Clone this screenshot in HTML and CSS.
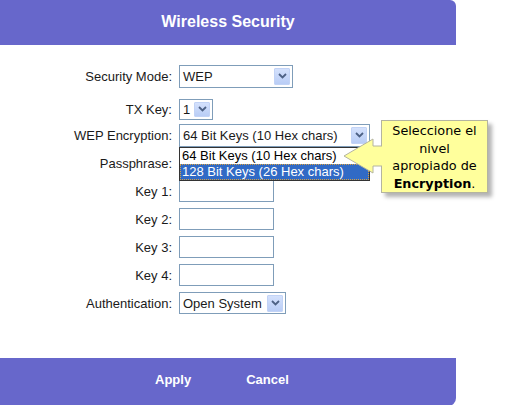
FILE: index.html
```html
<!DOCTYPE html>
<html>
<head>
<meta charset="utf-8">
<link rel="stylesheet" href="styles.css">
</head>
<body>
<div class="page">
  <div class="header">Wireless Security</div>
  <div class="form">
    <div class="row r1">
      <span class="label">Security Mode:</span>
      <div class="select w-mode"><span class="val">WEP</span><span class="btn"><svg width="9" height="6" viewBox="0 0 9 6"><path d="M1 1 L4.5 4.5 L8 1" fill="none" stroke="#4d6185" stroke-width="1.8"/></svg></span></div>
    </div>
    <div class="row r2">
      <span class="label">TX Key:</span>
      <div class="select w-tx"><span class="val">1</span><span class="btn"><svg width="9" height="6" viewBox="0 0 9 6"><path d="M1 1 L4.5 4.5 L8 1" fill="none" stroke="#4d6185" stroke-width="1.8"/></svg></span></div>
    </div>
    <div class="row">
      <span class="label">WEP Encryption:</span>
      <div class="select w-wep"><span class="val">64 Bit Keys (10 Hex chars)</span><span class="btn"><svg width="9" height="6" viewBox="0 0 9 6"><path d="M1 1 L4.5 4.5 L8 1" fill="none" stroke="#4d6185" stroke-width="1.8"/></svg></span>
        <div class="list">
          <div class="opt">64 Bit Keys (10 Hex chars)</div>
          <div class="opt sel">128 Bit Keys (26 Hex chars)</div>
        </div>
      </div>
    </div>
    <div class="row">
      <span class="label">Passphrase:</span>
      <div class="input"></div>
    </div>
    <div class="row">
      <span class="label">Key 1:</span>
      <div class="input"></div>
    </div>
    <div class="row">
      <span class="label">Key 2:</span>
      <div class="input"></div>
    </div>
    <div class="row">
      <span class="label">Key 3:</span>
      <div class="input"></div>
    </div>
    <div class="row">
      <span class="label">Key 4:</span>
      <div class="input"></div>
    </div>
    <div class="row">
      <span class="label">Authentication:</span>
      <div class="select w-auth"><span class="val">Open System</span><span class="btn"><svg width="9" height="6" viewBox="0 0 9 6"><path d="M1 1 L4.5 4.5 L8 1" fill="none" stroke="#4d6185" stroke-width="1.8"/></svg></span></div>
    </div>
  </div>
  <div class="footer">
    <span class="action">Apply</span>
    <span class="action">Cancel</span>
  </div>
  <div class="tip">
    <svg class="tip-arrow" width="44" height="40" viewBox="0 0 44 40">
      <path d="M1 19 L30 2 L30 9 L41 9 L41 29 L30 29 L30 36 Z" fill="#ffff9c"/>
      <path d="M39 9 L30 9 L30 2 L1 19 L30 36 L30 29 L39 29" fill="none" stroke="#b4b4a0" stroke-width="1"/>
    </svg>
    <div class="tip-box">Seleccione el<br>nivel<br>apropiado de<br><b>Encryption</b>.</div>
  </div>
</div>
</body>
</html>
```

FILE: styles.css
```css
html, body {
  margin: 0;
  padding: 0;
  background: #fff;
}
.page {
  position: relative;
  width: 529px;
  height: 405px;
  overflow: hidden;
  font-family: "Liberation Sans", Arial, sans-serif;
  font-size: 13px;
  color: #1a1a1a;
}
.header {
  width: 456px;
  height: 45px;
  background: #6767cb;
  border-top-right-radius: 6px;
  color: #fff;
  font-weight: bold;
  font-size: 16px;
  line-height: 43px;
  text-align: center;
}
.form {
  padding-top: 17px;
  display: flex;
  flex-direction: column;
  height: 295px;
  box-sizing: border-box;
}
.row {
  display: flex;
  align-items: center;
  height: 28px;
  gap: 7px;
}
.row.r2 {
  margin-top: 7px;
  height: 24px;
}
.label {
  width: 172px;
  text-align: right;
}
.select {
  position: relative;
  display: flex;
  align-items: center;
  box-sizing: border-box;
  height: 23px;
  border: 1px solid #7f9db9;
  background: #fff;
  padding-left: 3px;
  padding-right: 2px;
}
.select .val {
  flex: 1;
  white-space: nowrap;
}
.btn {
  display: flex;
  align-items: center;
  justify-content: center;
  box-sizing: border-box;
  width: 16px;
  height: 17px;
  background: linear-gradient(#d4e1fc, #b9cdf6);
  border: 1px solid #c2d3f6;
  border-radius: 1px;
}
.w-mode { width: 114px; }
.w-tx { width: 34px; height: 21px; }
.w-tx .btn { height: 15px; }
.w-wep { width: 191px; }
.w-auth { width: 107px; height: 22px; }
.input {
  box-sizing: border-box;
  width: 95px;
  height: 22px;
  border: 1px solid #7f9db9;
  background: #fff;
}
.list {
  position: absolute;
  left: -1px;
  top: 22px;
  width: 191px;
  box-sizing: border-box;
  border: 1px solid #333;
  background: #fff;
  z-index: 2;
}
.opt {
  height: 16px;
  line-height: 16px;
  padding-left: 2px;
  white-space: nowrap;
  color: #000;
}
.opt.sel {
  background: #316ac5;
  color: #fff;
  outline: 1px dotted #d8a040;
  outline-offset: -1px;
}
.footer {
  margin-top: 18px;
  width: 456px;
  height: 48px;
  box-sizing: border-box;
  background: #6767cb;
  border-bottom-right-radius: 8px;
  display: flex;
  align-items: center;
  padding-left: 155px;
  padding-bottom: 5px;
  gap: 55px;
  color: #fff;
  font-weight: bold;
}
.tip {
  position: absolute;
  left: 343px;
  top: 120px;
  display: flex;
  z-index: 3;
}
.tip-arrow {
  position: absolute;
  left: 0;
  top: 17px;
  z-index: 1;
}
.tip-box {
  margin-left: 38px;
  width: 107px;
  box-sizing: border-box;
  border: 1px solid #b4b4a0;
  background: #ffff9c;
  box-shadow: 4px 4px 4px rgba(0, 0, 0, 0.3);
  font-family: "DejaVu Sans", Verdana, sans-serif;
  font-size: 12.8px;
  line-height: 17.5px;
  padding-top: 1px;
  text-align: center;
  color: #000;
  position: relative;
  z-index: 0;
}
```
